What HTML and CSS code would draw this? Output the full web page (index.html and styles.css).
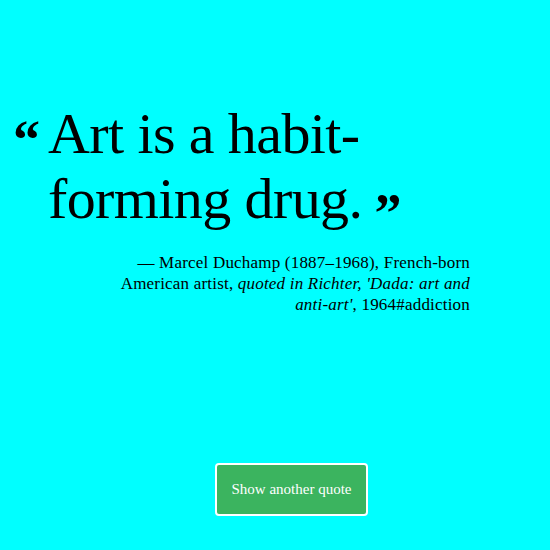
FILE: index.html
```html
<!DOCTYPE html>
<html>
<head>
<meta charset="utf-8">
<link rel="stylesheet" href="styles.css">
</head>
<body>
<main class="page">
  <blockquote class="quote">
    <span class="mark open">“</span>
    <p class="text">Art is a habit-<br>forming drug.<span class="mark close">”</span></p>
  </blockquote>
  <p class="author">— Marcel Duchamp (1887–1968), French-born American artist, <em>quoted in Richter, 'Dada: art and anti-art'</em>, 1964#addiction</p>
  <div class="actions">
    <button class="btn">Show another quote</button>
  </div>
</main>
</body>
</html>
```
FILE: styles.css
```css
html, body {
  margin: 0;
  padding: 0;
  background: #00ffff;
}
body {
  width: 550px;
  height: 550px;
  overflow: hidden;
  font-family: "Liberation Serif", "Times New Roman", serif;
  color: #000;
}
.page {
  padding-top: 101px;
  display: flex;
  flex-direction: column;
}
.quote {
  margin: 0;
  padding-left: 13px;
  display: flex;
  align-items: flex-start;
}
.mark {
  font-weight: bold;
  font-size: 54px;
  line-height: 1;
}
.open {
  width: 35px;
  padding-top: 12px;
}
.close {
  line-height: 0;
  margin-left: 12px;
  vertical-align: -13px;
}
.text {
  margin: 0;
  font-size: 58px;
  line-height: 65px;
  letter-spacing: -0.6px;
}
.author {
  margin: 21px 0 0 84px;
  width: 386px;
  text-align: right;
  font-size: 17px;
  line-height: 21px;
  letter-spacing: 0.2px;
}
.actions {
  margin-top: 148px;
  padding-left: 215px;
  display: flex;
}
.btn {
  width: 153px;
  height: 53px;
  background: #3bb45f;
  color: #fff;
  border: 2px solid #fff;
  border-radius: 4px;
  font-family: "Liberation Serif", "Times New Roman", serif;
  font-size: 15px;
}
```
